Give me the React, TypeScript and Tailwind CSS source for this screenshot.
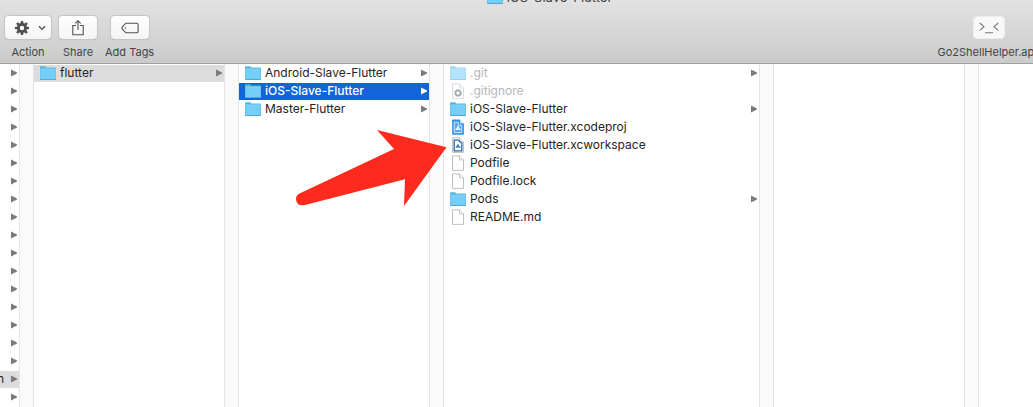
import type { ReactNode } from "react";

type Kind = "folder" | "file" | "config" | "project" | "workspace";

interface Entry {
  name: string;
  kind: Kind;
  expandable?: boolean;
  dimmed?: boolean;
  state?: "active" | "path";
}

const projects: Entry[] = [
  { name: "Android-Slave-Flutter", kind: "folder", expandable: true },
  { name: "iOS-Slave-Flutter", kind: "folder", expandable: true, state: "active" },
  { name: "Master-Flutter", kind: "folder", expandable: true },
];

const files: Entry[] = [
  { name: ".git", kind: "folder", expandable: true, dimmed: true },
  { name: ".gitignore", kind: "config", dimmed: true },
  { name: "iOS-Slave-Flutter", kind: "folder", expandable: true },
  { name: "iOS-Slave-Flutter.xcodeproj", kind: "project" },
  { name: "iOS-Slave-Flutter.xcworkspace", kind: "workspace" },
  { name: "Podfile", kind: "file" },
  { name: "Podfile.lock", kind: "file" },
  { name: "Pods", kind: "folder", expandable: true },
  { name: "README.md", kind: "file" },
];

const PARENT_ROWS = 19;
const PARENT_SELECTED = 17;

function FolderIcon() {
  return (
    <svg viewBox="0 0 16 16" className="size-4 shrink-0" aria-hidden="true">
      <path d="M0 2.2Q0 1.2 1 1.2H5.2L6.4 2.6H15.2Q16 2.6 16 3.4V14.2Q16 15 15.2 15H.8Q0 15 0 14.2Z" fill="#58b5dc" />
      <path d="M.4 4H15.6V14.2H.4Z" fill="#74cef8" />
      <path d="M.4 3.6H15.6V4.3H.4Z" fill="#93daf9" />
      <path d="M0 14.2H16V14.6Q15.8 15 15.2 15H.8Q.2 15 0 14.6Z" fill="#4ba5cc" />
    </svg>
  );
}

function DocumentIcon({ kind }: { kind: Kind }) {
  return (
    <svg viewBox="0 0 16 16" className="size-4 shrink-0" aria-hidden="true">
      <path d="M2.5 .9H9.5L13.5 4.9V15.4H2.5Z" fill="#fff" stroke="#b9b9b9" strokeWidth=".9" />
      <path d="M9.5 .9V4.9H13.5" fill="#f5f5f5" stroke="#b9b9b9" strokeWidth=".8" />
      {kind === "config" && (
        <g fill="none" stroke="#56636c">
          <circle cx="8" cy="10" r="2.5" strokeWidth="1.5" />
          <circle cx="8" cy="10" r="3.5" strokeWidth="1" strokeDasharray="1.4 1.35" />
        </g>
      )}
      {kind === "project" && (
        <>
          <path d="M2.2 .8H10L13.8 4.6V15.6H2.2Z" fill="#2f91e8" />
          <path d="M10 .8V4.6H13.8Z" fill="#c9e3f8" />
          <path d="M4.2 3.2H8.4V6.2H11.8V13.6H4.2Z" fill="#4da9f3" stroke="#e3f3ff" strokeWidth=".9" />
          <path d="M6 11L8 7.4L10 11M5.6 10.1H10.4" fill="none" stroke="#fff" strokeWidth="1.1" />
        </>
      )}
      {kind === "workspace" && (
        <>
          <path d="M4.2 3.2H8.4L11.8 6.4V13.8H4.2Z" fill="#fff" stroke="#2868a5" strokeWidth="1.3" />
          <path d="M6.2 10.8L8 7.4L9.8 10.8M5.8 9.9H10.2" fill="none" stroke="#2868a5" strokeWidth="1" />
        </>
      )}
    </svg>
  );
}

function Disclosure({ light = false }: { light?: boolean }) {
  return (
    <svg viewBox="0 0 6 8" className={`mt-1 h-2 w-1.5 shrink-0 ${light ? "text-white" : "text-[#7b7b7b]"}`} aria-hidden="true">
      <path d="M0 .4L6 3.6V4.4L0 7.6Z" fill="currentColor" />
    </svg>
  );
}

function Row({ entry }: { entry: Entry }) {
  const active = entry.state === "active";
  const tone = active
    ? "bg-[#1164dc] font-medium text-white"
    : entry.state === "path"
      ? "bg-[#dcdcdc] text-[#242424]"
      : "text-[#242424]";
  return (
    <li className="pt-px">
      <button type="button" className={`flex h-[17px] w-full items-start gap-1 pr-0.5 pl-1.5 text-left ${tone}`}>
        <span className={`flex min-w-0 flex-1 items-start gap-1 ${entry.dimmed ? "opacity-55" : ""}`}>
          {entry.kind === "folder" ? <FolderIcon /> : <DocumentIcon kind={entry.kind} />}
          <span className={`whitespace-nowrap ${entry.dimmed ? "text-[#7a7a7a]" : ""}`}>{entry.name}</span>
        </span>
        {entry.expandable && <Disclosure light={active} />}
      </button>
    </li>
  );
}

function Gutter() {
  return <div className="w-[15px] shrink-0 border-x border-[#e4e4e4] bg-[#fafafa]" />;
}

function ToolbarItem({ label, buttonClass, children }: { label: string; buttonClass: string; children: ReactNode }) {
  return (
    <div className="flex flex-col items-center gap-[5px]">
      <button
        type="button"
        aria-label={label}
        className={`flex h-[23px] items-center justify-center rounded-[4px] text-[#505050] ${buttonClass}`}
      >
        {children}
      </button>
      <span className="text-[11px] leading-4 whitespace-nowrap text-[#444]">{label}</span>
    </div>
  );
}

const raised = "bg-linear-to-b from-white to-[#f4f4f4] shadow-[0_0_0_1px_#c4c4c4,0_1px_1px_#a8a8a8]";
const teeth = [0, 45, 90, 135, 180, 225, 270, 315];

export default function App() {
  return (
    <main className="relative flex h-screen flex-col overflow-hidden bg-white font-['Inter','Liberation_Sans',sans-serif] text-[12px] leading-4">
      <header className="shrink-0 border-b border-[#a0a0a0] bg-linear-to-b from-[#e2e2e2] to-[#cbcbcb]">
        <div className="flex h-[5px] items-end justify-center gap-1 overflow-hidden pl-[66px] text-[13px] text-[#444]">
          <FolderIcon />
          <h1 className="leading-4">iOS-Slave-Flutter</h1>
        </div>
        <div className="flex items-start justify-between pt-[11px] pb-[3px] pl-[5px]">
          <div className="flex gap-2">
            <ToolbarItem label="Action" buttonClass={`w-[46px] gap-2 pl-1 ${raised}`}>
              <svg viewBox="0 0 16 16" className="size-4 shrink-0" aria-hidden="true">
                <circle cx="8" cy="8" r="3.6" fill="none" stroke="currentColor" strokeWidth="2.8" />
                {teeth.map((angle) => (
                  <path key={angle} d="M6.9 .9H9.1L9.5 4H6.5Z" fill="currentColor" transform={`rotate(${angle} 8 8)`} />
                ))}
              </svg>
              <svg viewBox="0 0 8 6" className="h-1.5 w-2 shrink-0" aria-hidden="true">
                <path d="M1 1.2L4 4.4L7 1.2" fill="none" stroke="currentColor" strokeWidth="1.3" />
              </svg>
            </ToolbarItem>
            <ToolbarItem label="Share" buttonClass={`w-[38px] ${raised}`}>
              <svg viewBox="0 0 14 18" className="h-[18px] w-3.5" aria-hidden="true">
                <path d="M5 6.5H1.8V15.8H12.2V6.5H9M7 11V1.8M4.3 4.4L7 1.7L9.7 4.4" fill="none" stroke="currentColor" strokeWidth="1.1" />
              </svg>
            </ToolbarItem>
            <ToolbarItem label="Add Tags" buttonClass={`w-[38px] ${raised}`}>
              <svg viewBox="0 0 18 12" className="h-3 w-[18px]" aria-hidden="true">
                <path d="M4.8 1.2H15.8Q17.1 1.2 17.1 2.5V9.5Q17.1 10.8 15.8 10.8H4.8L1.4 7.2Q.5 6 1.4 4.8Z" fill="none" stroke="currentColor" strokeWidth="1.1" />
                <circle cx="4.4" cy="6" r=".8" fill="currentColor" />
              </svg>
            </ToolbarItem>
          </div>
          <div className="-mr-2">
            <ToolbarItem label="Go2ShellHelper.app" buttonClass="w-8 bg-[#f8f8f8] border border-[#ededed]">
              <svg viewBox="0 0 20 12" className="h-3 w-5" aria-hidden="true">
                <path d="M.8 1L5 4.7L.8 8.4M19.2 1L15 4.7L19.2 8.4M6 10.8H14" fill="none" stroke="#777" strokeWidth="1.1" />
              </svg>
            </ToolbarItem>
          </div>
        </div>
      </header>

      <section className="flex min-h-0 flex-1 overflow-hidden" aria-label="Columns">
        <ul className="w-[19px] shrink-0 overflow-hidden">
          {Array.from({ length: PARENT_ROWS }, (_, index) => (
            <li key={index} className="pt-px">
              <div className={`flex h-[17px] items-start justify-end gap-[7px] pr-0.5 text-[#242424] ${index === PARENT_SELECTED ? "bg-[#dcdcdc]" : ""}`}>
                {index === PARENT_SELECTED && <span>n</span>}
                <Disclosure />
              </div>
            </li>
          ))}
        </ul>
        <Gutter />
        <ul className="w-[190px] shrink-0">
          <Row entry={{ name: "flutter", kind: "folder", expandable: true, state: "path" }} />
        </ul>
        <Gutter />
        <ul className="w-[190px] shrink-0">
          {projects.map((entry) => (
            <Row key={entry.name} entry={entry} />
          ))}
        </ul>
        <Gutter />
        <ul className="w-[315px] shrink-0">
          {files.map((entry) => (
            <Row key={entry.name} entry={entry} />
          ))}
        </ul>
        <Gutter />
        <div className="w-[190px] shrink-0" />
        <Gutter />
        <div className="flex-1" />
      </section>

      <svg viewBox="0 0 152 78" className="pointer-events-none absolute top-[129px] left-[295px] h-[78px] w-[152px]" aria-hidden="true">
        <path d="M4.5 64.5L99 20L82 1L151.5 18.3L109 77L110 50.3L10 76Q3.5 77.5 1.5 72.5Q-.3 67.2 4.5 64.5Z" fill="#fd2b1e" />
      </svg>
    </main>
  );
}
